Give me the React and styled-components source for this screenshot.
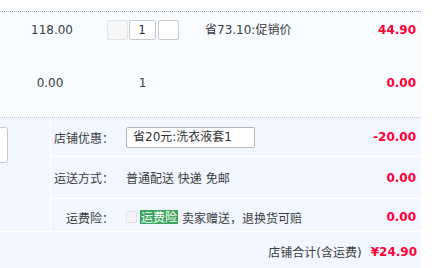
import React from 'react';
import styled, { createGlobalStyle } from 'styled-components';

const GlobalStyle = createGlobalStyle`
  body {
    margin: 0;
    background: #fff;
    font-family: "DejaVu Sans", "Noto Sans CJK SC", sans-serif;
    font-size: 12px;
    color: #3c3c3c;
  }
`;

const Wrapper = styled.div`
  width: 421px;
  padding-top: 11px;
`;

const ItemList = styled.div`
  background: #f8fbff;
  border-top: 1px dotted #8fa6d0;
  border-bottom: 1px dotted #c8c8c8;
`;

const ItemRow = styled.div`
  display: flex;
  align-items: flex-start;
  height: ${p => p.h}px;
  padding-top: 10px;
  box-sizing: border-box;
`;

const Cell = styled.div`
  width: ${p => p.w}px;
  flex: ${p => (p.grow ? 1 : 'none')};
  line-height: 16px;
  color: ${p => (p.red ? '#ff0036' : '#3c3c3c')};
  font-weight: ${p => (p.red ? 'bold' : 'normal')};
  padding-right: ${p => p.pr || 0}px;
  display: flex;
  justify-content: ${p => (p.align === 'center' ? 'center' : p.align === 'right' ? 'flex-end' : 'flex-start')};
`;

const Promo = styled.span`
  color: #3c3c3c;
  line-height: 16px;
`;

const Qty = styled.div`
  display: flex;
  margin-top: -2px;
  height: 20px;
`;

const QtyBtn = styled.div`
  width: ${p => p.w}px;
  height: 20px;
  box-sizing: border-box;
  border: 1px solid ${p => (p.disabled ? '#e3e3e3' : '#c9c9cf')};
  background: ${p => (p.disabled ? '#f5f6f7' : '#fff')};
  border-radius: 2px;
  margin-right: ${p => p.mr || 0}px;
  display: flex;
  align-items: center;
  justify-content: center;
  color: #333;
`;

const Extra = styled.div`
  display: flex;
  background: #f2f7ff;
  border-bottom: 1px solid #fff;
`;

const Side = styled.div`
  width: 50px;
  border-right: 1px solid #fff;
  padding-top: 9px;
  overflow: hidden;
`;

const Memo = styled.div`
  width: 110px;
  height: 36px;
  margin-left: -102px;
  box-sizing: border-box;
  background: #fff;
  border: 1px solid #c8c8c8;
  border-radius: 3px;
`;

const Options = styled.div`
  flex: 1;
`;

const OptionRow = styled.div`
  display: flex;
  align-items: center;
  height: ${p => p.h}px;
  padding-top: ${p => p.pt || 0}px;
  box-sizing: border-box;
  border-bottom: ${p => (p.last ? 'none' : '1px solid #fff')};
`;

const Label = styled.div`
  width: 63px;
  text-align: right;
  margin-right: 12px;
  font-family: "Noto Sans CJK SC", sans-serif;
  color: #3c3c3c;
`;

const Value = styled.div`
  flex: 1;
  display: flex;
  align-items: center;
  color: #3c3c3c;
`;

const Amount = styled.div`
  font-weight: bold;
  color: #ff0036;
  padding-right: 5px;
`;

const CouponBox = styled.div`
  width: 129px;
  height: 21px;
  box-sizing: border-box;
  border: 1px solid #b5b5b5;
  border-radius: 2px;
  background: #fff;
  padding-left: 6px;
  line-height: 19px;
  color: #333;
`;

const Check = styled.span`
  width: 11px;
  height: 12px;
  box-sizing: border-box;
  border: 1px solid #e0e0e0;
  border-radius: 2px;
  background: #f4f5f7;
  margin-right: 3px;
`;

const Badge = styled.span`
  font-family: "Noto Sans CJK SC", sans-serif;
  background: #3ca65e;
  color: #fff;
  line-height: 14px;
  height: 14px;
  padding: 0 1px;
  margin-right: 4px;
`;

const Footer = styled.div`
  display: flex;
  justify-content: flex-end;
  align-items: center;
  height: 39px;
  background: #f2f7ff;
  padding-right: 4px;
`;

const Total = styled.span`
  font-weight: bold;
  color: #ff0036;
  margin-left: 9px;
`;

const App = () => (
  <Wrapper>
    <GlobalStyle />
    <ItemList>
      <ItemRow h={53}>
        <Cell w={104} align="center">118.00</Cell>
        <Cell w={3} />
        <Cell w={71} align="center">
          <Qty>
            <QtyBtn w={21} mr={1} disabled />
            <QtyBtn w={27} mr={2}>1</QtyBtn>
            <QtyBtn w={21} />
          </Qty>
        </Cell>
        <Cell w={27} />
        <Cell grow><Promo>省73.10:促销价</Promo></Cell>
        <Cell w={80} align="right" pr={5} red>44.90</Cell>
      </ItemRow>
      <ItemRow h={52}>
        <Cell w={100} align="center">0.00</Cell>
        <Cell w={7} />
        <Cell w={71} align="center">1</Cell>
        <Cell w={27} />
        <Cell grow />
        <Cell w={80} align="right" pr={5} red>0.00</Cell>
      </ItemRow>
    </ItemList>
    <Extra>
      <Side>
        <Memo />
      </Side>
      <Options>
        <OptionRow h={39}>
          <Label>店铺优惠：</Label>
          <Value><CouponBox>省20元:洗衣液套1</CouponBox></Value>
          <Amount>-20.00</Amount>
        </OptionRow>
        <OptionRow h={42}>
          <Label>运送方式：</Label>
          <Value>普通配送 快递 免邮</Value>
          <Amount>0.00</Amount>
        </OptionRow>
        <OptionRow h={32} pt={4} last>
          <Label>运费险：</Label>
          <Value>
            <Check />
            <Badge>运费险</Badge>
            卖家赠送，退换货可赔
          </Value>
          <Amount>0.00</Amount>
        </OptionRow>
      </Options>
    </Extra>
    <Footer>
      店铺合计(含运费)
      <Total>¥24.90</Total>
    </Footer>
  </Wrapper>
);

export default App;
